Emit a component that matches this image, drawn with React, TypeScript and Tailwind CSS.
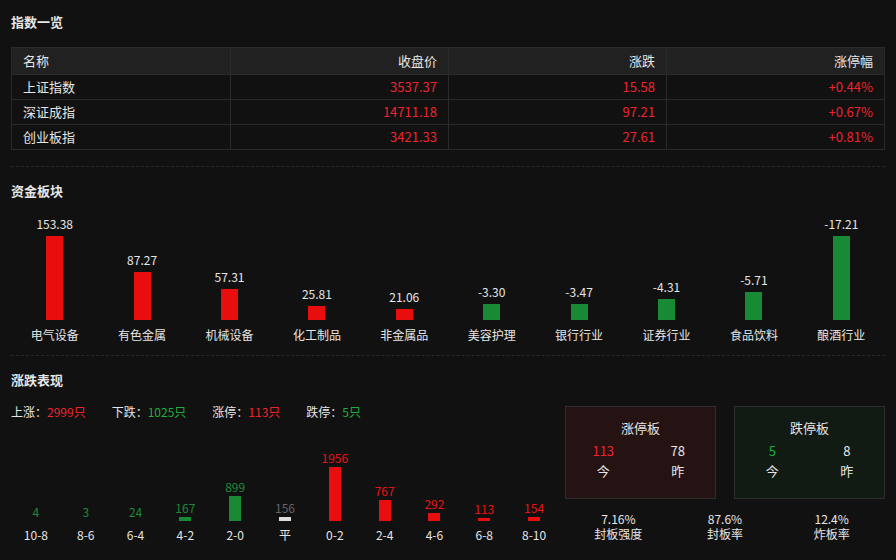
import React from "react";

const red = "text-[#f0232c]";
const green = "text-[#1fae3c]";

const idx = [
  ["上证指数", "3537.37", "15.58", "+0.44%"],
  ["深证成指", "14711.18", "97.21", "+0.67%"],
  ["创业板指", "3421.33", "27.61", "+0.81%"],
];
const sectors: [string, number][] = [
  ["电气设备", 153.38], ["有色金属", 87.27], ["机械设备", 57.31], ["化工制品", 25.81], ["非金属品", 21.06],
  ["美容护理", -3.3], ["银行行业", -3.47], ["证券行业", -4.31], ["食品饮料", -5.71], ["酿酒行业", -17.21],
];
const dist: [string, number, string][] = [
  ["10-8", 4, "g"], ["8-6", 3, "g"], ["6-4", 24, "g"], ["4-2", 167, "g"], ["2-0", 899, "g"], ["平", 156, "w"],
  ["0-2", 1956, "r"], ["2-4", 767, "r"], ["4-6", 292, "r"], ["6-8", 113, "r"], ["8-10", 154, "r"],
];

function sectorH(v: number) {
  const map: Record<string, number> = { "153.38": 84, "87.27": 48, "57.31": 31, "25.81": 14, "21.06": 11, "-3.3": 16, "-3.47": 16, "-4.31": 21, "-5.71": 28, "-17.21": 84 };
  return map[String(v)] ?? Math.abs(v);
}
function distH(v: number) {
  const map: Record<number, number> = { 4: 0, 3: 0, 24: 0, 167: 4, 899: 25, 156: 4, 1956: 54, 767: 21, 292: 8, 113: 3, 154: 4 };
  return map[v];
}

export default function App() {
  return (
    <div className="w-[896px] h-[560px] bg-[#111111] text-[#e6e6e6] px-[11px] overflow-hidden" style={{ fontFamily: '"Noto Sans CJK SC", "Noto Sans", sans-serif' }}>
      <div className="pt-[13px] text-[13px] font-bold leading-[18px]">指数一览</div>
      <div className="mt-[16px] border border-[#2a2a2a] text-[13px]">
        <div className="grid grid-cols-4 bg-[#212121] h-[26px] items-center">
          <div className="px-[11px]">名称</div>
          <div className="px-[11px] text-right border-l border-[#2a2a2a] h-full leading-[26px]">收盘价</div>
          <div className="px-[11px] text-right border-l border-[#2a2a2a] h-full leading-[26px]">涨跌</div>
          <div className="px-[11px] text-right border-l border-[#2a2a2a] h-full leading-[26px]">涨停幅</div>
        </div>
        {idx.map((r) => (
          <div key={r[0]} className="grid grid-cols-4 h-[25px] border-t border-[#2a2a2a] leading-[24px]">
            <div className="px-[11px]">{r[0]}</div>
            {r.slice(1).map((c, i) => (
              <div key={i} className={`px-[11px] text-right border-l border-[#2a2a2a] ${red}`}>{c}</div>
            ))}
          </div>
        ))}
      </div>
      <div className="mt-[16px] border-t border-dashed border-[#2a2a2a]" />
      <div className="pt-[15px] text-[13px] font-bold leading-[18px]">资金板块</div>
      <div className="grid grid-cols-10 mt-[2px] h-[141px]">
        {sectors.map(([n, v]) => (
          <div key={n} className="flex flex-col items-center justify-end">
            <div className="text-[12px] leading-[16px] mb-[4px]">{v.toFixed(2)}</div>
            <div className={`w-[17px] ${v > 0 ? "bg-[#e80e0e]" : "bg-[#188a36]"}`} style={{ height: sectorH(v) }} />
            <div className="text-[12px] leading-[16px] mt-[7px]">{n}</div>
          </div>
        ))}
      </div>
      <div className="mt-[12px] border-t border-dashed border-[#2a2a2a]" />
      <div className="pt-[15px] text-[13px] font-bold leading-[18px]">涨跌表现</div>
      <div className="flex gap-[6px] mt-[4px]">
        <div className="w-[549px]">
          <div className="flex text-[12px] leading-[18px] mt-[10px] gap-[26px]">
            <span>上涨：<span className={red}>2999只</span></span>
            <span>下跌：<span className={green}>1025只</span></span>
            <span>涨停：<span className={red}>113只</span></span>
            <span>跌停：<span className={green}>5只</span></span>
          </div>
          <div className="grid grid-cols-11 h-[119px] mt-[3px]">
            {dist.map(([l, v, c]) => (
              <div key={l} className="flex flex-col items-center justify-end">
                <div className={`text-[12px] leading-[14px] mb-[2px] ${c === "g" ? "text-[#1c8c38]" : c === "w" ? "text-[#666]" : "text-[#e81414]"}`}>{v}</div>
                <div className={`w-[12px] ${c === "g" ? "bg-[#188a36]" : c === "w" ? "bg-[#dddddd]" : "bg-[#e80e0e]"}`} style={{ height: distH(v) }} />
                <div className="text-[12px] leading-[16px] mt-[6px]">{l}</div>
              </div>
            ))}
          </div>
        </div>
        <div className="flex-1 pt-[13px]">
          <div className="flex gap-[18px]">
            <div className="w-[151px] h-[93px] bg-[#251212] border border-[#2e2e2e] flex flex-col items-center pt-[12px] text-[13px]">
              <div className="leading-[18px]">涨停板</div>
              <div className="grid grid-cols-2 w-full mt-[4px] text-center leading-[20px]">
                <div className={red}>113</div><div>78</div><div>今</div><div>昨</div>
              </div>
            </div>
            <div className="w-[151px] h-[93px] bg-[#121a14] border border-[#2e2e2e] flex flex-col items-center pt-[12px] text-[13px]">
              <div className="leading-[18px]">跌停板</div>
              <div className="grid grid-cols-2 w-full mt-[4px] text-center leading-[20px]">
                <div className={green}>5</div><div>8</div><div>今</div><div>昨</div>
              </div>
            </div>
          </div>
          <div className="grid grid-cols-3 text-center text-[12px] leading-[15px] mt-[12px]">
            <div>7.16%<br />封板强度</div>
            <div>87.6%<br />封板率</div>
            <div>12.4%<br />炸板率</div>
          </div>
        </div>
      </div>
    </div>
  );
}
